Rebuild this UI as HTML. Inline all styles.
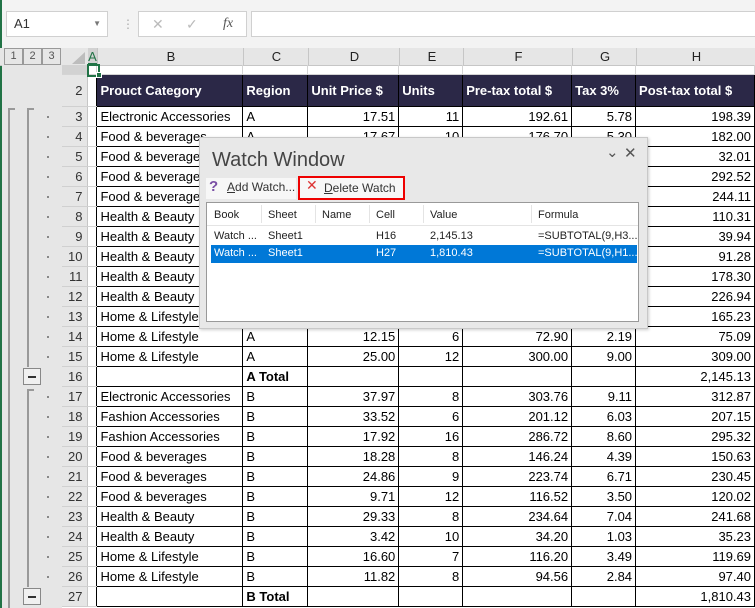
<!DOCTYPE html>
<html><head><style>
body{margin:0;width:755px;height:608px;overflow:hidden;background:#fff;font-family:"Liberation Sans",sans-serif;position:relative}
.abs{position:absolute}
table{border-collapse:collapse;table-layout:fixed;position:absolute;left:62px;top:65px}
td{padding:0 3px;font-size:13px;height:19px;line-height:19px;white-space:nowrap;overflow:hidden;color:#000;border:1px solid #000}
td.rh{background:#e6e6e6;color:#333;text-align:right;border:none;border-bottom:1px solid #d0d0d0;border-right:1px solid #c6c6c6;padding-right:5px}
td.a{border:none;border-bottom:1px solid #d4d4d4;border-right:1px solid #000}
td.r{text-align:right}
tr.h td{background:#2b2847;color:#fff;font-weight:bold;height:31px}
tr.h td.rh,tr.h td.a{background:#e6e6e6;color:#333;font-weight:normal}
tr.h td.a{background:#fff}
tr.one td{height:9px;line-height:9px;border:none;border-bottom:1px solid #d4d4d4;border-right:1px solid #d4d4d4;font-size:8px}
</style></head><body>
<div class="abs" style="left:0;top:0;width:755px;height:48px;background:#f3f3f3"></div>
<div class="abs" style="left:0;top:0;width:2px;height:608px;background:#217346"></div>
<div class="abs" style="left:6px;top:11px;width:100px;height:24px;background:#fff;border:1px solid #d0d0d0;font-size:13px;line-height:24px;color:#333"><span style="margin-left:7px">A1</span><span style="position:absolute;right:6px;top:0;font-size:8px;color:#777">▼</span></div>
<div class="abs" style="left:122px;top:17px;color:#aaa;font-size:12px">⋮</div>
<div class="abs" style="left:138px;top:11px;width:107px;height:24px;background:#fff;border:1px solid #d0d0d0;color:#bbb;font-size:14px;line-height:24px"><span style="position:absolute;left:13px">✕</span><span style="position:absolute;left:47px">✓</span><span style="position:absolute;left:84px;color:#555;font-style:italic;font-family:'Liberation Serif',serif">fx</span></div>
<div class="abs" style="left:251px;top:11px;width:504px;height:24px;background:#fff;border:1px solid #d0d0d0"></div>
<div class="abs" style="left:0;top:48px;width:755px;height:17px;background:#e6e6e6;border-bottom:1px solid #c6c6c6"></div>
<div class="abs" style="left:2px;top:65px;width:60px;height:543px;background:#e6e6e6"></div>
<div class="abs" style="left:4px;top:48px;font-size:11px;color:#555">
<span style="display:inline-block;width:17px;height:15px;border:1px solid #999;text-align:center;line-height:15px">1</span><span style="display:inline-block;width:17px;height:15px;border:1px solid #999;text-align:center;line-height:15px">2</span><span style="display:inline-block;width:17px;height:15px;border:1px solid #999;text-align:center;line-height:15px">3</span></div>
<div class="abs" style="left:72px;top:52px;width:0;height:0;border-left:13px solid transparent;border-bottom:12px solid #bdbdbd"></div>
<div class="abs" style="top:48px;left:88px;width:667px;height:17px;font-size:13px;line-height:17px;color:#222">
<span class="abs" style="left:0;width:9px;text-align:center;color:#217346;background:#d2d2d2;height:17px;border-bottom:2px solid #217346;box-sizing:border-box">A</span>
<span class="abs" style="left:9px;width:146px;text-align:center;border-left:1px solid #c6c6c6">B</span>
<span class="abs" style="left:155px;width:65px;text-align:center;border-left:1px solid #c6c6c6">C</span>
<span class="abs" style="left:220px;width:91px;text-align:center;border-left:1px solid #c6c6c6">D</span>
<span class="abs" style="left:311px;width:64px;text-align:center;border-left:1px solid #c6c6c6">E</span>
<span class="abs" style="left:375px;width:109px;text-align:center;border-left:1px solid #c6c6c6">F</span>
<span class="abs" style="left:484px;width:64px;text-align:center;border-left:1px solid #c6c6c6">G</span>
<span class="abs" style="left:548px;width:119px;text-align:center;border-left:1px solid #c6c6c6">H</span>
</div>
<table>
<colgroup><col style="width:26px"><col style="width:9px"><col style="width:146px"><col style="width:65px"><col style="width:91px"><col style="width:64px"><col style="width:109px"><col style="width:64px"><col style="width:119px"></colgroup>
<tr class="one"><td class="rh" style="background:#d2d2d2"></td><td></td><td></td><td></td><td></td><td></td><td></td><td></td><td></td></tr>
<tr class="h"><td class="rh">2</td><td class="a"></td><td>Prouct Category</td><td>Region</td><td>Unit Price $</td><td>Units</td><td>Pre-tax total $</td><td>Tax 3%</td><td>Post-tax total $</td></tr>
<tr><td class="rh">3</td><td class="a"></td><td>Electronic Accessories</td><td>A</td><td class="r">17.51</td><td class="r">11</td><td class="r">192.61</td><td class="r">5.78</td><td class="r">198.39</td></tr>
<tr><td class="rh">4</td><td class="a"></td><td>Food &amp; beverages</td><td>A</td><td class="r">17.67</td><td class="r">10</td><td class="r">176.70</td><td class="r">5.30</td><td class="r">182.00</td></tr>
<tr><td class="rh">5</td><td class="a"></td><td>Food &amp; beverages</td><td>A</td><td class="r">10.36</td><td class="r">3</td><td class="r">31.08</td><td class="r">0.93</td><td class="r">32.01</td></tr>
<tr><td class="rh">6</td><td class="a"></td><td>Food &amp; beverages</td><td>A</td><td class="r">28.40</td><td class="r">10</td><td class="r">284.00</td><td class="r">8.52</td><td class="r">292.52</td></tr>
<tr><td class="rh">7</td><td class="a"></td><td>Food &amp; beverages</td><td>A</td><td class="r">23.70</td><td class="r">10</td><td class="r">237.00</td><td class="r">7.11</td><td class="r">244.11</td></tr>
<tr><td class="rh">8</td><td class="a"></td><td>Health &amp; Beauty</td><td>A</td><td class="r">10.71</td><td class="r">10</td><td class="r">107.10</td><td class="r">3.21</td><td class="r">110.31</td></tr>
<tr><td class="rh">9</td><td class="a"></td><td>Health &amp; Beauty</td><td>A</td><td class="r">19.39</td><td class="r">2</td><td class="r">38.78</td><td class="r">1.16</td><td class="r">39.94</td></tr>
<tr><td class="rh">10</td><td class="a"></td><td>Health &amp; Beauty</td><td>A</td><td class="r">22.15</td><td class="r">4</td><td class="r">88.62</td><td class="r">2.66</td><td class="r">91.28</td></tr>
<tr><td class="rh">11</td><td class="a"></td><td>Health &amp; Beauty</td><td>A</td><td class="r">17.31</td><td class="r">10</td><td class="r">173.10</td><td class="r">5.20</td><td class="r">178.30</td></tr>
<tr><td class="rh">12</td><td class="a"></td><td>Health &amp; Beauty</td><td>A</td><td class="r">22.03</td><td class="r">10</td><td class="r">220.33</td><td class="r">6.61</td><td class="r">226.94</td></tr>
<tr><td class="rh">13</td><td class="a"></td><td>Home &amp; Lifestyle</td><td>A</td><td class="r">16.04</td><td class="r">10</td><td class="r">160.42</td><td class="r">4.81</td><td class="r">165.23</td></tr>
<tr><td class="rh">14</td><td class="a"></td><td>Home &amp; Lifestyle</td><td>A</td><td class="r">12.15</td><td class="r">6</td><td class="r">72.90</td><td class="r">2.19</td><td class="r">75.09</td></tr>
<tr><td class="rh">15</td><td class="a"></td><td>Home &amp; Lifestyle</td><td>A</td><td class="r">25.00</td><td class="r">12</td><td class="r">300.00</td><td class="r">9.00</td><td class="r">309.00</td></tr>
<tr><td class="rh">16</td><td class="a"></td><td></td><td><b>A Total</b></td><td></td><td></td><td></td><td></td><td class="r">2,145.13</td></tr>
<tr><td class="rh">17</td><td class="a"></td><td>Electronic Accessories</td><td>B</td><td class="r">37.97</td><td class="r">8</td><td class="r">303.76</td><td class="r">9.11</td><td class="r">312.87</td></tr>
<tr><td class="rh">18</td><td class="a"></td><td>Fashion Accessories</td><td>B</td><td class="r">33.52</td><td class="r">6</td><td class="r">201.12</td><td class="r">6.03</td><td class="r">207.15</td></tr>
<tr><td class="rh">19</td><td class="a"></td><td>Fashion Accessories</td><td>B</td><td class="r">17.92</td><td class="r">16</td><td class="r">286.72</td><td class="r">8.60</td><td class="r">295.32</td></tr>
<tr><td class="rh">20</td><td class="a"></td><td>Food &amp; beverages</td><td>B</td><td class="r">18.28</td><td class="r">8</td><td class="r">146.24</td><td class="r">4.39</td><td class="r">150.63</td></tr>
<tr><td class="rh">21</td><td class="a"></td><td>Food &amp; beverages</td><td>B</td><td class="r">24.86</td><td class="r">9</td><td class="r">223.74</td><td class="r">6.71</td><td class="r">230.45</td></tr>
<tr><td class="rh">22</td><td class="a"></td><td>Food &amp; beverages</td><td>B</td><td class="r">9.71</td><td class="r">12</td><td class="r">116.52</td><td class="r">3.50</td><td class="r">120.02</td></tr>
<tr><td class="rh">23</td><td class="a"></td><td>Health &amp; Beauty</td><td>B</td><td class="r">29.33</td><td class="r">8</td><td class="r">234.64</td><td class="r">7.04</td><td class="r">241.68</td></tr>
<tr><td class="rh">24</td><td class="a"></td><td>Health &amp; Beauty</td><td>B</td><td class="r">3.42</td><td class="r">10</td><td class="r">34.20</td><td class="r">1.03</td><td class="r">35.23</td></tr>
<tr><td class="rh">25</td><td class="a"></td><td>Home &amp; Lifestyle</td><td>B</td><td class="r">16.60</td><td class="r">7</td><td class="r">116.20</td><td class="r">3.49</td><td class="r">119.69</td></tr>
<tr><td class="rh">26</td><td class="a"></td><td>Home &amp; Lifestyle</td><td>B</td><td class="r">11.82</td><td class="r">8</td><td class="r">94.56</td><td class="r">2.84</td><td class="r">97.40</td></tr>
<tr><td class="rh">27</td><td class="a"></td><td></td><td><b>B Total</b></td><td></td><td></td><td></td><td></td><td class="r">1,810.43</td></tr>
</table>
<div class="abs" style="left:87px;top:64px;width:9px;height:9px;border:2px solid #217346"></div>
<div class="abs" style="left:96px;top:72px;width:4px;height:4px;background:#217346;border:1px solid #fff"></div>
<svg class="abs" style="left:0;top:100px" width="62" height="508">
<g stroke="#999" stroke-width="2" fill="none">
<path d="M15 9H9V508"/><path d="M34 9H28V267"/><path d="M34 290H28V487"/>
</g>
<g fill="#888"><rect x="47" y="16" width="2" height="2"/><rect x="47" y="36" width="2" height="2"/><rect x="47" y="56" width="2" height="2"/><rect x="47" y="76" width="2" height="2"/><rect x="47" y="96" width="2" height="2"/><rect x="47" y="116" width="2" height="2"/><rect x="47" y="136" width="2" height="2"/><rect x="47" y="156" width="2" height="2"/><rect x="47" y="176" width="2" height="2"/><rect x="47" y="196" width="2" height="2"/><rect x="47" y="216" width="2" height="2"/><rect x="47" y="236" width="2" height="2"/><rect x="47" y="256" width="2" height="2"/><rect x="47" y="296" width="2" height="2"/><rect x="47" y="316" width="2" height="2"/><rect x="47" y="336" width="2" height="2"/><rect x="47" y="356" width="2" height="2"/><rect x="47" y="376" width="2" height="2"/><rect x="47" y="396" width="2" height="2"/><rect x="47" y="416" width="2" height="2"/><rect x="47" y="436" width="2" height="2"/><rect x="47" y="456" width="2" height="2"/><rect x="47" y="476" width="2" height="2"/></g>
<g fill="#f0f0f0" stroke="#888"><rect x="23.5" y="268.5" width="17" height="16"/><rect x="23.5" y="488.5" width="17" height="16"/></g>
<g stroke="#333" stroke-width="2"><path d="M28 277h8M28 497h8"/></g>
</svg>
<div class="abs" style="left:199px;top:137px;width:447px;height:190px;background:#e8e8e8;border:1px solid #c8c8c8;box-shadow:1px 1px 3px rgba(0,0,0,.2)">
<div class="abs" style="left:12px;top:11px;font-size:20px;color:#444">Watch Window</div>
<div class="abs" style="left:406px;top:5px;font-size:15px;color:#555">&#8964;</div>
<div class="abs" style="left:424px;top:6px;font-size:15px;color:#555">✕</div>
<div class="abs" style="left:6px;top:40px;width:90px;height:21px;background:#f7f7f7"></div>
<div class="abs" style="left:9px;top:40px;font-size:15px;font-weight:bold;color:#7a4fa5">?</div>
<div class="abs" style="left:27px;top:42px;font-size:12px;color:#333"><u>A</u>dd Watch...</div>
<div class="abs" style="left:98px;top:38px;width:103px;height:20px;border:2px solid #e00;background:#f7f7f7"></div>
<div class="abs" style="left:106px;top:39px;font-size:14px;color:#d33">✕</div>
<div class="abs" style="left:124px;top:43px;font-size:12px;color:#333"><u>D</u>elete Watch</div>
<div class="abs" style="left:6px;top:64px;width:431px;height:118px;background:#fff;border:1px solid #999;font-size:11px;color:#222">
<div class="abs" style="left:0;top:0;width:431px;height:22px;border-bottom:1px solid #e4e4e4"></div>
<div class="abs" style="left:54px;top:2px;width:1px;height:18px;background:#e4e4e4"></div>
<div class="abs" style="left:108px;top:2px;width:1px;height:18px;background:#e4e4e4"></div>
<div class="abs" style="left:162px;top:2px;width:1px;height:18px;background:#e4e4e4"></div>
<div class="abs" style="left:216px;top:2px;width:1px;height:18px;background:#e4e4e4"></div>
<div class="abs" style="left:324px;top:2px;width:1px;height:18px;background:#e4e4e4"></div>
<div class="abs" style="top:6px;left:7px">Book</div><div class="abs" style="top:6px;left:61px">Sheet</div><div class="abs" style="top:6px;left:115px">Name</div><div class="abs" style="top:6px;left:169px">Cell</div><div class="abs" style="top:6px;left:223px">Value</div><div class="abs" style="top:6px;left:331px">Formula</div>
<div class="abs" style="top:27px;left:7px">Watch ...</div><div class="abs" style="top:27px;left:61px">Sheet1</div><div class="abs" style="top:27px;left:169px">H16</div><div class="abs" style="top:27px;left:223px">2,145.13</div><div class="abs" style="top:27px;left:331px">=SUBTOTAL(9,H3...</div>
<div class="abs" style="top:42px;left:4px;width:426px;height:18px;background:#0078d7;color:#fff">
<div class="abs" style="top:2px;left:3px">Watch ...</div><div class="abs" style="top:2px;left:57px">Sheet1</div><div class="abs" style="top:2px;left:165px">H27</div><div class="abs" style="top:2px;left:219px">1,810.43</div><div class="abs" style="top:2px;left:327px">=SUBTOTAL(9,H1...</div></div>
</div>
</div>
</body></html>
